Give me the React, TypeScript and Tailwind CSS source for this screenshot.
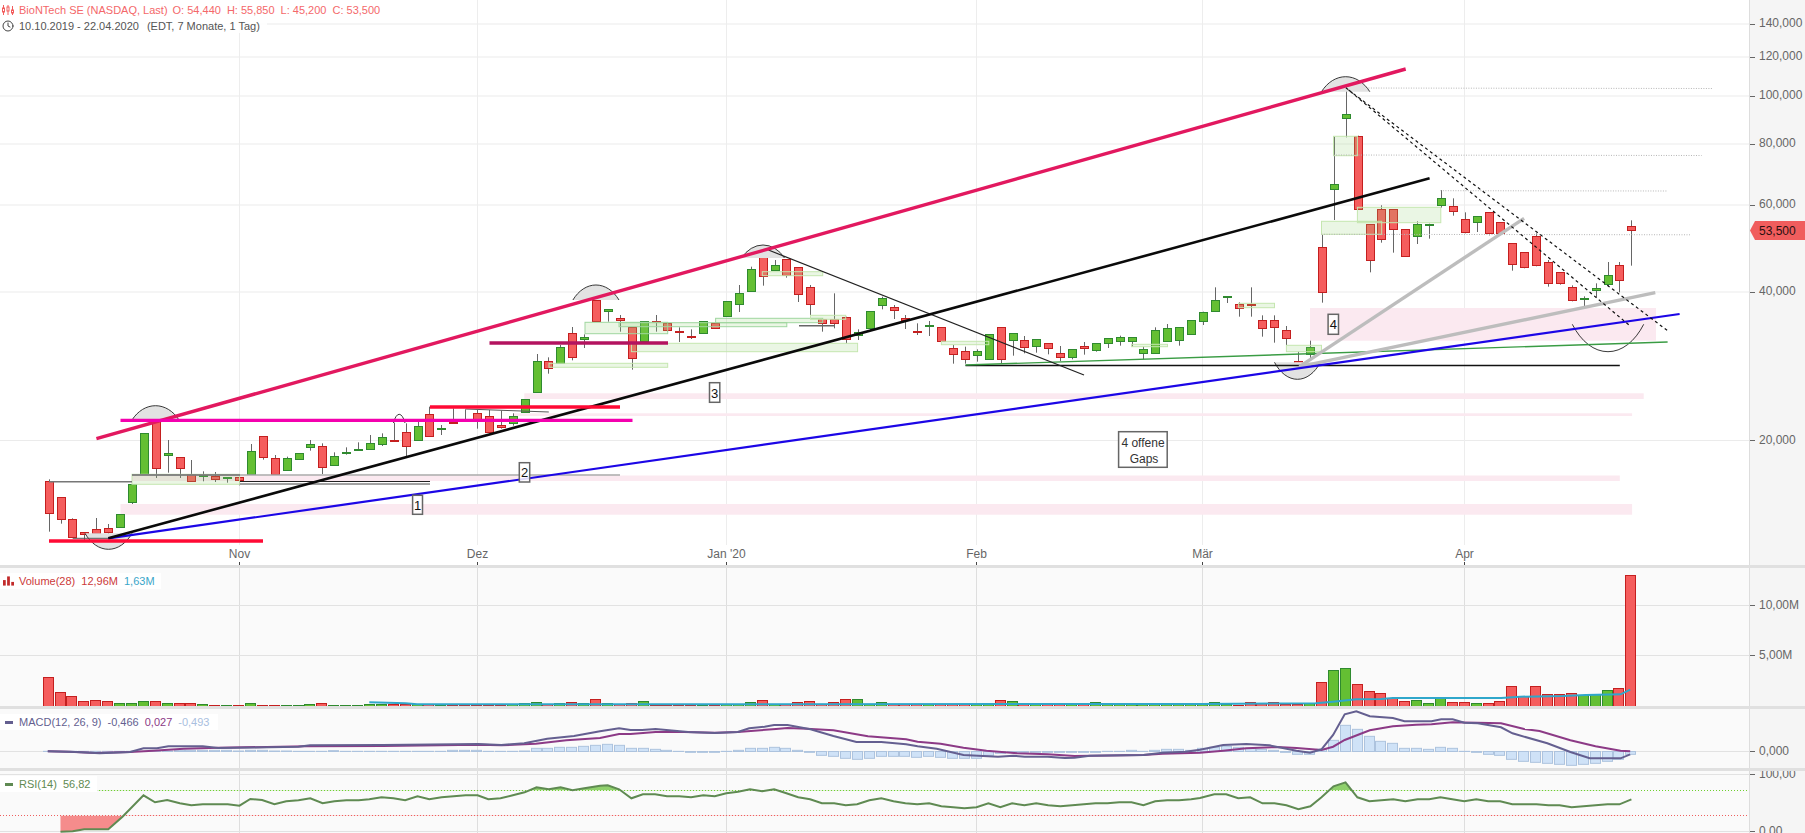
import React from "react";
import { Clock } from "lucide-react";

const K = 2.6133;
const K2 = 2.5917;
const W = 1749;
const X = (i: number) => 48.6 + 11.9 * i;
const RED_F = "#f55d5d", RED_S = "#c41f1f", GRN_F = "#64bf33", GRN_S = "#2f8a2f", WICK = "#666";

type C = number[];
const seg = (oy: number, a: C[]) => a.map(([g, t, b, wt, wb]) => ({
  g: g === 1, t: oy + t / 3, b: oy + b / 3, wt: oy + (wt ?? t) / 3, wb: oy + (wb ?? b) / 3,
}));
const candles = [
  ...seg(280, [
    [0,604,700,598,755],[0,652,718,652,731],[0,718,773,715,773],[0,757,764,757,780],[0,748,761,714,775],[0,745,758,732,775],
    [1,703,743],[1,613,668,613,672],[1,460,583],[0,420,563,420,594],[1,519,524,480,578],[0,532,565,532,594],[0,583,605,540,605],
    [1,586,590,574,604],[0,587,596,576,606],[1,591,594,591,608],[0,592,600,592,616],[1,514,584,492,584],[0,469,533,469,539],
    [0,535,584,525,584],[1,535,571,530,571],[1,520,539],[1,493,503,480,512],[0,499,563,490,582],[1,529,557,517,557],[1,517,521,502,524],
    [1,508,512,487,512],[1,490,509,465,509],[1,472,494,460,498],[0,481,482,428,482],[0,457,500,430,530],[1,439,482,425,482],
    [0,403,470,380,470],[1,445,449,435,465],[0,426,428,385,428],[0,419,423,388,423],[0,400,425,390,446],[0,409,458,390,460],
    [0,436,443,392,446],[1,407,428,400,437],[1,358,398],[1,244,337,222,337],[0,244,265,232,281],[1,202,250,195,250],[0,160,233,141,241],
    [1,172,178,163,204],[0,60,122,60,125],
  ]),
  ...seg(220, [
    [1,268,275,268,305],[0,295,302,285,335],[0,322,416,322,449],[1,304,365],[0,304,307,285,335],[0,310,331,310,335],[0,334,338,322,366],
    [0,349,351,328,357],[1,304,341],[0,308,322,308,326],[1,244,290],[1,218,250,195,276],[1,148,214,140,214],[0,109,169,97,197],[1,136,152,120,152],
    [0,118,166,118,173],[0,142,223,142,246],[0,202,253,195,285],[0,298,310,295,335],[0,298,310,220,325],[0,290,355,290,370],[1,337,345,328,360],
    [1,274,326,274,330],[1,235,256,230,268],[0,262,271,255,297],[0,295,302,285,327],[0,334,338,310,345],[1,316,319,303,348],[0,322,364],
    [0,385,403,375,431],[0,394,418,380,431],[1,394,406,388,425],[1,343,418],[0,322,418,322,430],[1,340,361,340,407],[0,361,382,348,400],
    [1,358,379,358,398],[0,370,385,370,403],[0,400,412,378,423],[1,388,412,388,418],[0,379,385,366,404],[1,370,391,370,395],[1,355,370,355,384],
    [1,352,364,347,377],[1,352,364,352,380],[1,388,400,380,418],[1,331,400,322,400],[1,325,364,312,364],[1,322,361,322,377],[1,301,343],
  ]),
  ...seg(60, [
    [1,755,782,755,795],[1,721,754,682,754],[1,709,712,709,729],[0,733,746,727,770],[0,731,732,682,770],[0,781,805,766,830],[0,781,802,766,848],
    [0,811,835,798,855],[0,904,916,875,916],[1,860,880,842,898],[0,562,697,525,728],[1,371,385,230,480],[1,163,176,80,232],[0,227,445],
    [0,493,601,493,637],[0,448,538,436,548],[0,448,508,448,578],[0,508,589],[1,493,529,484,552],[1,491,494,491,536],[1,415,437,390,443],
    [0,439,454,415,467],[0,478,517,457,520],[1,469,487,469,516],[0,457,520,457,526],[0,487,520],[0,550,613,550,632],[0,577,622,577,625],
    [0,529,616,520,619],[0,607,670,600,680],[0,637,670,637,674],[0,682,721,676,724],[1,715,718,709,739],[1,685,691,670,712],[1,646,673,606,680],
    [0,616,661,606,697],[0,499,511,481,617],
  ]),
];

const volTops = [
  352,397,409,424,421,424,430,430,424,424,430,430,430,433,435,435,435,430,435,435,
  435,435,433,430,435,435,435,433,433,433,433,433,433,435,435,435,435,435,435,433,
  430,427,433,430,427,430,418,430,433,430,424,435,435,435,435,435,435,433,433,427,
  421,433,433,427,424,433,427,418,418,433,427,433,433,433,433,433,433,433,433,433,
  421,424,433,433,433,433,433,433,427,433,433,433,433,433,433,433,433,433,427,433,
  435,427,430,427,433,433,430,367,331,325,373,394,400,415,424,421,430,415,427,427,
  430,430,424,379,409,379,403,403,400,406,403,391,385,46,
];
const hist = [
  574,574,574,574,574,574,574,574,574,574,573,571,571,571,571,571,573,571,571,573,
  573,574,574,574,572,574,574,574,574,574,574,574,574,574,571,571,571,574,574,574,
  573,565,565,562,562,559,556,553,556,565,565,568,571,574,577,577,577,574,571,565,
  565,562,565,571,577,586,589,595,598,595,589,589,589,592,589,592,595,595,595,586,
  580,577,577,577,577,577,577,577,577,574,574,571,574,571,568,568,571,565,562,559,
  562,565,568,571,577,583,583,568,541,496,508,529,544,550,565,565,568,562,565,574,
  577,583,586,598,604,607,610,613,616,613,610,604,598,583,
];

const pts = (ox: number, oy: number, a: number[][]) => a.map(([x, y]) => [ox + x / (ox === 1200 ? K2 : K), oy + y / 3]);
const str = (a: number[][]) => a.map(([x, y]) => `${x.toFixed(1)},${y.toFixed(1)}`).join(" ");

const volMA = [
  ...pts(0, 560, [[965,427],[1060,430],[1090,433],[1568,433]]),
  ...pts(600, 560, [[0,433],[1568,432]]),
  ...pts(1200, 560, [[0,432],[300,430],[345,425],[405,418],[470,417],[500,414],[780,414],[830,410],[940,408],[1000,405],[1090,403],[1115,389]]),
];
const macdDark = [
  ...pts(0, 560, [[125,574],[200,576],[260,580],[340,576],[375,565],[410,565],[440,559],[530,559],[570,564],[780,560],[810,556],[1000,555],[1250,552],[1310,555],[1370,550],[1430,536],[1500,528],[1568,514]]),
  ...pts(600, 560, [[50,505],[80,510],[110,510],[145,507],[230,516],[300,519],[360,516],[390,505],[430,500],[455,495],[490,495],[550,508],[610,528],[670,546],[735,546],[800,553],[830,559],[880,566],[950,585],[1040,590],[1080,587],[1110,590],[1170,590],[1215,594],[1240,593],[1280,587],[1420,585],[1470,578],[1530,575],[1568,569]]),
  ...pts(1200, 560, [[60,555],[120,552],[180,556],[250,572],[285,578],[315,568],[345,525],[375,463],[405,454],[440,469],[500,474],[530,484],[600,484],[625,478],[655,478],[685,488],[720,490],[780,502],[810,520],[900,550],[960,576],[1010,595],[1090,595],[1115,583]]),
];
const macdPurple = [
  ...pts(0, 560, [[125,574],[180,575],[250,579],[340,576],[400,572],[480,566],[570,563],[800,559],[1000,558],[1250,554],[1310,556],[1400,551],[1480,541],[1568,534]]),
  ...pts(600, 560, [[50,522],[80,522],[145,516],[220,516],[300,518],[360,516],[460,507],[490,504],[540,506],[610,511],[700,529],[800,538],[830,545],[890,551],[950,563],[1010,572],[1090,580],[1170,583],[1240,588],[1420,585],[1470,581],[1568,578]]),
  ...pts(1200, 560, [[60,572],[120,565],[200,561],[250,564],[315,570],[345,560],[375,540],[415,522],[440,511],[500,499],[560,494],[600,493],[655,487],[780,490],[840,507],[880,513],[960,541],[1025,559],[1090,572],[1115,574]]),
];
const rsi = [
  ...pts(0, 560, [[158,815],[190,814],[220,808],[283,808],[320,770],[375,706],[405,727],[437,720],[470,730],[500,736],[530,733],[595,733],[626,737],[654,717],[685,720],[717,733],[748,724],[780,721],[811,715],[843,730],[874,724],[905,721],[937,721],[965,718],[997,712],[1028,715],[1059,721],[1091,709],[1122,718],[1154,712],[1217,706],[1248,706],[1276,718],[1308,715],[1340,706],[1371,697],[1402,682],[1434,688],[1465,682],[1496,691],[1527,685],[1568,677]]),
  ...pts(600, 560, [[20,676],[50,688],[82,715],[112,703],[144,703],[175,709],[207,709],[238,712],[270,706],[300,709],[330,700],[361,695],[392,688],[424,694],[455,688],[487,700],[518,712],[549,718],[580,730],[612,730],[642,736],[672,733],[704,721],[735,715],[767,724],[798,730],[829,733],[860,730],[892,739],[923,742],[952,745],[984,742],[1015,730],[1046,742],[1077,730],[1109,736],[1140,730],[1171,736],[1203,739],[1234,736],[1295,730],[1326,730],[1357,727],[1389,727],[1420,736],[1451,724],[1482,721],[1513,721],[1545,718],[1568,714]]),
  ...pts(1200, 560, [[37,703],[68,703],[99,715],[130,712],[162,730],[193,730],[224,736],[255,748],[286,739],[315,712],[346,679],[377,667],[408,712],[439,724],[470,721],[501,718],[532,724],[564,718],[594,718],[623,712],[654,718],[685,724],[716,718],[747,724],[778,724],[809,733],[841,733],[872,733],[903,736],[932,736],[963,742],[994,739],[1025,736],[1056,733],[1087,733],[1118,718]]),
];

const VX = [239.5, 477.5, 726.5, 976.5, 1202.5, 1464.5];
const MONTHS = ["Nov", "Dez", "Jan '20", "Feb", "Mär", "Apr"];
const PRICE_Y = [24, 57, 96, 144, 205, 292, 440.5];

const pink = [
  [120.5, 1632.1, 504, 514.7], [132, 1619.8, 475.5, 481], [513, 1632.1, 413.3, 416], [524.3, 1643.7, 393.3, 399], [1310, 1656, 308, 340.7],
];
const gaps: number[][] = [
  [132, 239.6, 474.3, 484.3, 0], [585, 667.7, 322.3, 333.7, 1], [549, 667.7, 363.3, 367.3, 0], [619, 786.8, 322.7, 326.7, 1],
  [631.4, 857.6, 343.3, 351.7, 0], [715.6, 822.7, 318.3, 322.7, 1], [762.3, 822.7, 271.7, 275.7, 0], [810.5, 845.7, 315.3, 319.3, 0],
  [941.4, 988.8, 341.3, 344.7, 0], [1131.6, 1167.5, 344.3, 346.7, 0], [1238.6, 1274.5, 303.3, 307.7, 0], [1286.4, 1321.5, 345.3, 351.7, 0],
  [1321.5, 1381.7, 221.3, 234.3, 0], [1357.4, 1440.8, 207.3, 222.7, 0], [1333.5, 1357.4, 136.3, 155.7, 0],
];
const lines: (number | string)[][] = [
  [132, 475, 620, 475, "#aaaaaa", 1.5],
  [49, 481.7, 132, 481.7, "#777777", 1.5],
  [132, 475, 240, 475, "#555555", 1],
  [240, 481.5, 430, 481.5, "#222222", 1],
  [240, 484, 430, 484, "#444444", 1],
  [72.7, 538.3, 109, 538.3, "#555555", 1],
  [465.7, 409, 548.8, 412, "#555555", 1],
  [799, 325.7, 834, 325.7, "#666666", 1.5],
  [965.5, 365.5, 1619.8, 365.5, "#111111", 1.3],
  [965.5, 365, 1667.6, 342, "#3a9c44", 1.4],
  [768.4, 250, 1084, 375, "#222222", 1.2],
  [1299.5, 366.7, 1524.1, 218.3, "#bdbdbd", 3.4],
  [1299.5, 366.7, 1655.3, 292.7, "#bdbdbd", 3.4],
  [108.3, 538.3, 1679.6, 314, "#1c06e6", 2.2],
  [108.3, 538.3, 1429.6, 178.3, "#0a0a0a", 2.6],
  [96.4, 438.7, 1405.7, 69, "#e2185f", 3.4],
  [489.5, 343, 668, 343, "#b3135f", 3.3],
  [430, 407, 620, 407, "#ff0a35", 3.3],
  [120.5, 420.3, 632.5, 420.3, "#f400ae", 3.3],
  [49, 541, 263, 541, "#ff0a35", 3.3],
];
const dotted = [[1345.9, 88, 1713.2, 88.5], [1333.5, 155, 1701.6, 155.5], [1440.4, 190.7, 1667.6, 191], [1321.5, 234.3, 1690, 234.8]];
const arcs = [
  [132, 179, 405.7, 420, 0, 1], [85, 132, 549.3, 533.3, 1, 1], [393.4, 405, 414.3, 423, 0, 0], [572.9, 619, 285, 300, 0, 1],
  [741.6, 784.5, 245, 258, 0, 1], [1321.5, 1369.8, 76.7, 91.7, 0, 1], [1274.5, 1320.4, 379.3, 362.3, 1, 1], [1572.3, 1643.7, 351.7, 324.3, 1, 0],
];
const notes: [number, number, number, number, string][] = [
  [412.6, 495.3, 422.5, 514.3, "1"], [519.3, 462.7, 529.7, 482, "2"], [709.5, 382.7, 719.8, 402.3, "3"], [1328.1, 314.3, 1338.5, 334.3, "4"],
];

const Candle = ({ i }: { i: number }) => {
  const c = candles[i];
  const x = Math.round(X(i));
  const top = Math.round(c.t) + 0.5;
  const h = Math.max(1, Math.round(c.b - c.t));
  return (
    <g>
      <line x1={x + 0.5} x2={x + 0.5} y1={c.wt} y2={c.wb} stroke={WICK} strokeWidth={1} />
      <rect x={x - 3.5} y={top} width={8} height={h} fill={c.g ? GRN_F : RED_F} stroke={c.g ? GRN_S : RED_S} strokeWidth={1} />
    </g>
  );
};

const MainChart = () => (
  <svg width={W} height={565} viewBox={`0 0 ${W} 565`} className="block">
    {PRICE_Y.map((y) => <line key={y} x1={0} x2={W} y1={y} y2={y} stroke="#ebebeb" />)}
    {VX.map((x) => <line key={x} x1={x} x2={x} y1={0} y2={545} stroke="#ededed" />)}
    {pink.map(([a, b, c, d], k) => <rect key={k} x={a} y={c} width={b - a} height={d - c} fill="#fbe9f0" />)}
    {candles.map((_, i) => <Candle key={i} i={i} />)}
    {gaps.map(([a, b, c, d, s], k) => (
      <rect key={k} x={a} y={c} width={b - a} height={d - c} fill="#96d278" fillOpacity={0.2} stroke={s ? "#9fd69f" : "#c5e6b0"} strokeWidth={1} />
    ))}
    {dotted.map(([a, b, c, d], k) => <line key={k} x1={a} y1={b} x2={c} y2={d} stroke="#b5b5b5" strokeDasharray="1 1.5" />)}
    {arcs.map(([a, b, t, base, down, f], k) => {
      const w = b - a, h = Math.abs(t - base);
      const d = `M${a} ${base} A${(w / 2) * 1.3} ${h * 2.77} 0 0 ${down ? 0 : 1} ${b} ${base}`;
      return <path key={k} d={d} fill={f ? "#e2e2e2" : "none"} stroke="#222222" strokeWidth={0.9} />;
    })}
    {lines.map(([a, b, c, d, col, w], k) => (
      <line key={k} x1={a as number} y1={b as number} x2={c as number} y2={d as number} stroke={col as string} strokeWidth={w as number} />
    ))}
    <line x1={1345.9} y1={87.7} x2={1631} y2={326.7} stroke="#111111" strokeWidth={1.2} strokeDasharray="3 3" />
    <line x1={1348.6} y1={90} x2={1667.6} y2={330.7} stroke="#111111" strokeWidth={1.2} strokeDasharray="3 3" />
    {notes.map(([a, b, c, d, t]) => (
      <g key={t + a}>
        <rect x={a} y={b} width={c - a} height={d - b} fill="#ffffff" fillOpacity={0.85} stroke="#666666" strokeWidth={1.5} />
        <text x={(a + c) / 2} y={(b + d) / 2 + 5} textAnchor="middle" fontSize={13} fill="#111111">{t}</text>
      </g>
    ))}
    <rect x={1118.6} y={431.7} width={48.6} height={35.6} fill="#ffffff" stroke="#666666" strokeWidth={1.5} />
    <text x={1143} y={447} textAnchor="middle" fontSize={12} fill="#333333">4 offene</text>
    <text x={1144} y={463} textAnchor="middle" fontSize={12} fill="#333333">Gaps</text>
    {MONTHS.map((m, k) => (
      <g key={m}>
        <text x={VX[k]} y={558} textAnchor="middle" fontSize={12} fill="#666666">{m}</text>
        <line x1={VX[k]} x2={VX[k]} y1={562} y2={565} stroke="#444444" />
      </g>
    ))}
  </svg>
);

const VGrid = ({ top, bottom }: { top: number; bottom: number }) => (
  <>{VX.map((x) => <line key={x} x1={x} x2={x} y1={top} y2={bottom} stroke="#dedede" />)}</>
);

const VolumeChart = () => (
  <svg width={W} height={138} viewBox={`0 568 ${W} 138`} className="block">
    <VGrid top={568} bottom={706} />
    <line x1={0} x2={W} y1={605.5} y2={605.5} stroke="#e2e2e2" />
    <line x1={0} x2={W} y1={655.5} y2={655.5} stroke="#e2e2e2" />
    {volTops.map((t, i) => {
      const y = Math.round(560 + t / 3) + 0.5;
      const g = candles[i].g;
      return <rect key={i} x={Math.round(X(i)) - 5.5} y={y} width={10} height={707 - y} fill={g ? GRN_F : RED_F} stroke={g ? GRN_S : RED_S} />;
    })}
    <polyline points={str(volMA)} fill="none" stroke="#2fa7cb" strokeWidth={2} />
  </svg>
);

const MacdChart = () => (
  <svg width={W} height={59} viewBox={`0 709 ${W} 59`} className="block">
    <VGrid top={709} bottom={768} />
    <line x1={0} x2={W} y1={751.5} y2={751.5} stroke="#e2e2e2" />
    {hist.map((v, i) => {
      const y = 560 + v / 3;
      const top = Math.min(y, 751.5), h = Math.abs(y - 751.5);
      return <rect key={i} x={Math.round(X(i)) - 5.5} y={top} width={10} height={h} fill="#cfe2f7" stroke="#adc3de" />;
    })}
    <polyline points={str(macdPurple)} fill="none" stroke="#8c3a86" strokeWidth={2} />
    <polyline points={str(macdDark)} fill="none" stroke="#645f90" strokeWidth={2} />
  </svg>
);

const L_HI = 790.5, L_LO = 815.5;
const rsiClosed = (lvl: number) => `${str(rsi)} ${rsi[rsi.length - 1][0]},${lvl} ${rsi[0][0]},${lvl}`;

const RsiChart = () => (
  <svg width={W} height={62} viewBox={`0 771 ${W} 62`} className="block">
    <defs>
      <clipPath id="rsi-hi"><rect x={0} y={771} width={W} height={L_HI - 771} /></clipPath>
      <clipPath id="rsi-lo"><rect x={0} y={L_LO} width={W} height={833 - L_LO} /></clipPath>
    </defs>
    <VGrid top={771} bottom={833} />
    <line x1={0} x2={W} y1={774.5} y2={774.5} stroke="#e2e2e2" />
    <line x1={0} x2={W} y1={831.5} y2={831.5} stroke="#e2e2e2" />
    <polygon points={rsiClosed(L_HI)} fill="#8fd06c" clipPath="url(#rsi-hi)" />
    <polygon points={rsiClosed(L_LO)} fill="#f58c8c" clipPath="url(#rsi-lo)" />
    <line x1={0} x2={W} y1={L_HI} y2={L_HI} stroke="#6fcf2f" strokeDasharray="1 2" />
    <line x1={0} x2={W} y1={L_LO} y2={L_LO} stroke="#ef5f5f" strokeDasharray="1 2" />
    <polyline points={str(rsi)} fill="none" stroke="#5f8a52" strokeWidth={2} />
  </svg>
);

const Axis = ({ items, top, children }: { items: [string, number][]; top: number; children?: React.ReactNode }) => (
  <div className="relative w-[56px] shrink-0 overflow-hidden border-l border-[#dddddd] bg-[#f5f5f5]">
    {items.map(([t, y]) => (
      <div key={t} className="absolute left-0 flex items-center gap-[4px] -translate-y-1/2 text-xs leading-4 text-[#666666]" style={{ top: y - top }}>
        <span className="h-px w-[5px] bg-[#666666]" />
        <span className="-mt-[2px]">{t}</span>
      </div>
    ))}
    {children}
  </div>
);

const CandleIcon = () => (
  <svg width={12} height={10} viewBox="0 0 12 10" className="shrink-0" stroke="#f25c5c" fill="none" strokeWidth={1}>
    <path d="M1.5 0V3M1.5 7V10M6 0V2M6 6V10M10.5 1V5M10.5 8V10" />
    <rect x={0.5} y={3} width={2} height={4} />
    <rect x={5} y={2} width={2} height={4} />
    <rect x={9.5} y={5} width={2} height={3} />
  </svg>
);

const Sep = () => <div className="h-[3px] shrink-0 bg-[#e0e0e0]" />;

export default function App() {
  return (
    <div className="flex h-[833px] w-[1805px] flex-col overflow-hidden bg-white font-['Liberation_Sans',Arial,sans-serif] text-[11px]">
      <div className="flex h-[565px] shrink-0">
        <div className="relative w-[1749px] shrink-0">
          <MainChart />
          <div className="absolute left-0 top-0 flex h-[33px] w-[267px] flex-col bg-white/90 pl-[2px] pt-[2px] leading-4">
            <div className="flex h-4 items-center gap-[5px] whitespace-nowrap text-[#f4686a]">
              <CandleIcon />
              <span>BioNTech SE (NASDAQ, Last)</span>
              <span>O: 54,440</span>
              <span className="pl-[1px]">H: 55,850</span>
              <span className="pl-[1px]">L: 45,200</span>
              <span className="pl-[1px]">C: 53,500</span>
            </div>
            <div className="flex h-4 items-center gap-[5px] whitespace-nowrap text-[#555555]">
              <Clock size={12} strokeWidth={2} color="#444444" className="shrink-0" />
              <span>10.10.2019 - 22.04.2020</span>
              <span className="pl-[3px]">(EDT, 7 Monate, 1 Tag)</span>
            </div>
          </div>
        </div>
        <Axis top={0} items={[["140,000", 24], ["120,000", 57], ["100,000", 96], ["80,000", 144], ["60,000", 205], ["40,000", 292], ["20,000", 440.5]]}>
          <div className="absolute left-0 top-[221px] flex h-[19px] w-[55px] items-center bg-[#f05d5d] pl-[9px] text-xs text-[#2a1010] [clip-path:polygon(0_50%,5px_0,100%_0,100%_100%,5px_100%)]">53,500</div>
        </Axis>
      </div>
      <Sep />
      <div className="flex h-[138px] shrink-0 bg-[#fafafa]">
        <div className="relative w-[1749px] shrink-0">
          <VolumeChart />
          <div className="absolute left-0 top-[5px] flex h-4 items-center gap-[6px] bg-white pr-[6px] whitespace-nowrap">
            <svg width={11} height={10} viewBox="0 0 12 10" className="ml-[3px] -mr-[1px] shrink-0" fill="#c22a2a"><rect x={0} y={4} width={3} height={6} /><rect x={4.5} y={0} width={3} height={10} /><rect x={9} y={6} width={3} height={4} /></svg>
            <span className="text-[#cc3a3a]">Volume(28)</span>
            <span className="text-[#cc3a3a]">12,96M</span>
            <span className="text-[#3aa6c9]">1,63M</span>
          </div>
        </div>
        <Axis top={568} items={[["10,00M", 605.5], ["5,00M", 655.5]]} />
      </div>
      <Sep />
      <div className="flex h-[59px] shrink-0 bg-[#fafafa]">
        <div className="relative w-[1749px] shrink-0">
          <MacdChart />
          <div className="absolute left-0 top-[5px] flex h-4 items-center gap-[6px] bg-white pr-[9px] whitespace-nowrap">
            <span className="ml-[5px] h-[3px] w-[8px] shrink-0 bg-[#645f90]" />
            <span className="text-[#645f90]">MACD(12, 26, 9)</span>
            <span className="text-[#645f90]">-0,466</span>
            <span className="text-[#8c3a86]">0,027</span>
            <span className="text-[#a9c0e0]">-0,493</span>
          </div>
        </div>
        <Axis top={709} items={[["0,000", 751.5]]} />
      </div>
      <Sep />
      <div className="flex h-[62px] shrink-0 bg-[#fafafa]">
        <div className="relative w-[1749px] shrink-0">
          <RsiChart />
          <div className="absolute left-0 top-[5px] flex h-4 items-center gap-[6px] bg-white pr-[7px] whitespace-nowrap">
            <span className="ml-[5px] h-[3px] w-[8px] shrink-0 bg-[#5f8a52]" />
            <span className="text-[#5f8a52]">RSI(14)</span>
            <span className="text-[#5f8a52]">56,82</span>
          </div>
        </div>
        <Axis top={771} items={[["100,00", 774.5], ["0,00", 831.5]]} />
      </div>
    </div>
  );
}
